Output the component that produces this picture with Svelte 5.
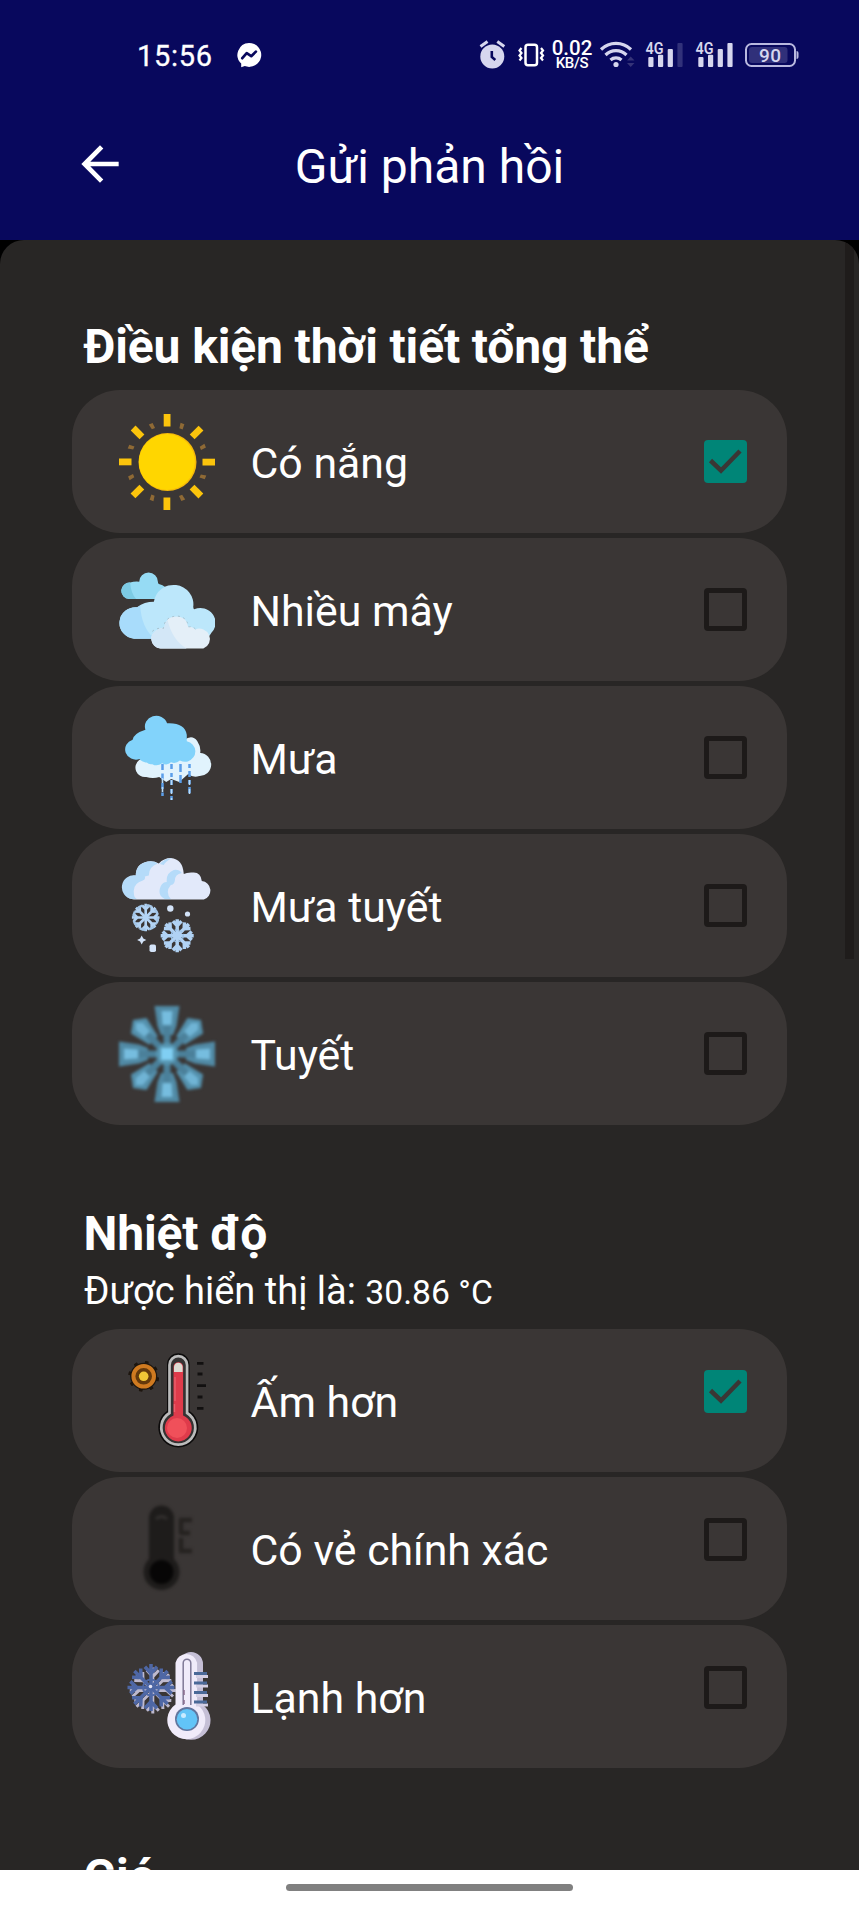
<script>
  let groups = $state([
    {
      title: 'Điều kiện thời tiết tổng thể',
      items: [
        { icon: 'sun', label: 'Có nắng', checked: true },
        { icon: 'clouds', label: 'Nhiều mây', checked: false },
        { icon: 'rain', label: 'Mưa', checked: false },
        { icon: 'sleet', label: 'Mưa tuyết', checked: false },
        { icon: 'snow', label: 'Tuyết', checked: false }
      ]
    },
    {
      title: 'Nhiệt độ',
      caption: 'Được hiển thị là:',
      value: '30.86 °C',
      items: [
        { icon: 'warmer', label: 'Ấm hơn', checked: true },
        { icon: 'accurate', label: 'Có vẻ chính xác', checked: false },
        { icon: 'colder', label: 'Lạnh hơn', checked: false }
      ]
    },
    { title: 'Gió', items: [] }
  ]);

  const eight = [0, 45, 90, 135, 180, 225, 270, 315];
</script>

{#snippet flake(cx, cy, s, color, w)}
  <g transform="translate({cx} {cy}) scale({s})" stroke={color} stroke-width={w} fill="none">
    {#each eight as a}
      <path d="M0 0V-10M-2.6-8.8L0-6 2.6-8.8" transform="rotate({a})" />
    {/each}
  </g>
{/snippet}

{#snippet weather(name)}
  <svg class="picture" class:soft={name === 'snow' || name === 'accurate'} viewBox="0 0 96 96" aria-hidden="true">
    {#if name === 'sun'}
      {#each eight as a}
        <rect x="44.7" y="0" width="6.8" height="12.5" fill="#fbc40c" transform="rotate({a} 48 48)" />
        <path d="M45.5 6.5L49.6 6.500 50 12 46.500 12Z" fill="#8f6a35" transform="rotate({a + 22.5} 48 48)" />
      {/each}
      <circle cx="48.5" cy="48" r="29" fill="#f5b90a" />
      <circle cx="47.9" cy="48" r="28" fill="#ffd600" />
    {:else if name === 'clouds'}
      <g transform="translate(-1 2.400) scale(1.010 .985)">
        <path d="M11 35a8.200 8.200 0 0 1 1-16.500q4-1.500 9-1a9.200 9.200 0 0 1 18.500 0q0 2 1 2.500 8 2 8.500 8v7z" fill="#96dbf4" />
        <path d="M11 35a8.200 8.200 0 0 1 1-16.500q1 12 6 16.500z" fill="#7dcbe4" />
        <path d="M16 75.500a15.800 15.800 0 0 1 3-32q7-5.500 16.500-5.500a19.600 19.600 0 0 1 39 5q0 2.500 1 2.500a15 15 0 0 1 17 24q-3 6-8 6z" fill="#bce7fb" />
        <path d="M16 75.500a15.800 15.800 0 0 1 3-32l3-1.700q1 22 14 33.700z" fill="#a8dcfb" />
        <path d="M42 85.500a10 10 0 0 1-2-19.500q3-2 6-1.500 1-11.500 12-11.500 10 0 11.500 10.500 4-1 7 2.500a10.300 10.300 0 0 1 8 19.500z" fill="#e4eff8" />
        <path d="M42 85.500a10 10 0 0 1-2-19.500q3-2 6-1.500 0-5 3-8 5 21 19 29z" fill="#d3e7f7" />
        <path d="M34 68q4-4 11-3 1-12 13-12.500 10 0 12 11 4-1 7 2.500" fill="none" stroke="#a5bcc8" stroke-width=".9" stroke-dasharray="2 3.500" />
      </g>
    {:else if name === 'rain'}
      <path d="M28 67a9.500 9.500 0 0 1-7-17L66 30q8-6 13 1 4 6 3 12a11.500 11.500 0 0 1-1 23q-6 2-11-2l-9 8-8-3-5 3-7-5q-6 2-13 0z" fill="#e1f3fd" transform="translate(-.800 0)" />
      <path transform="translate(.800 4) scale(.985 .920)" d="M27 53q-5-1-7-4A10.300 10.300 0 1 1 13 28q1-7 13-11a11 11 0 0 1 22-7q18-1 20 12.500v7a11.500 11.500 0 0 1 1 22q-4 1-8-1-4 4-9 2-4 4-9 1-5 4-10 1-3 1-6-2z" fill="#82d3fb" />
      <g stroke="#5b9ee9" stroke-width="2.500">
        <path d="M43.500 54v32" stroke-dasharray="6 3.500" />
        <path d="M52.500 54v36" stroke-dasharray="5 4 4 3" />
        <path d="M61.500 54v19" stroke-dasharray="8 3" />
        <path d="M70.500 54v32" stroke-dasharray="4 3 6 3" />
      </g>
      <path d="M43.500 68v14M52.500 70v20M70.500 70v15" stroke="#b9dcfa" stroke-width="1.600" stroke-dasharray="5 4" />
    {:else if name === 'sleet'}
      <g transform="translate(1.800 0)">
        <path d="M13 41.500a11.500 11.500 0 0 1 2-24q0-12 12-14 6-1 11 2Q43 0 50 0q12 1 13 16 3-2 10-1.500 7 0 8 8.500a9.500 9.500 0 0 1 2 18.500z" fill="#e2e9fa" />
        <path d="M11 41a11.500 11.500 0 0 1 4-23.500q0-12 12-14 6-1 10 2-9 3-9 12l-4 1q1 3-2 4-10 3-9 12 0 5 3 6.500zM39 6q5-6 12-6-7 4-8 7zM44 41q-8-4-4-13 2-4 6-4-1-9 7-12 5-1 8 3-7 1-7 8-1 4-4 4-6 7 0 14z" fill="#b5dbf9" />
      </g>
      {@render flake(26.7, 59.5, 1.38, '#b3d4f5', 1.9)}
      <circle cx="26.700" cy="59.500" r="12.300" fill="none" stroke="#a3c6e8" stroke-width="2.500" stroke-dasharray="6 3.660" />
      {@render flake(58.2, 77.7, 1.65, '#b0d2f4', 2.1)}
      <circle cx="58.200" cy="77.700" r="6" fill="none" stroke="#9cc3e8" stroke-width="1.500" stroke-dasharray="3 2" />
      <g fill="#d3e3f8">
        <circle cx="51.300" cy="50.500" r="3.200" /><circle cx="68.500" cy="56" r="2.600" />
        <path d="M22.700 77.500l1.600 3 3 1.500-3 1.500-1.600 3-1.600-3-3-1.500 3-1.500z" /><rect x="30.500" y="86.500" width="6.500" height="7.500" rx="1.800" />
      </g>
    {:else if name === 'snow'}
      {#each eight as a}
        <g transform="rotate({a} 48 48)">
          {#if a % 90 === 0}
            <path d="M35.500 0H60.500L57.500 20 54 29H42L38.500 20Z" fill="#518aa5" /><path d="M42.500 5h11l-1 14h-9z" fill="#76bddf" />
          {:else}
            <path d="M48 0L59 8 54 29H42L37 8Z" fill="#5490ac" /><path d="M48 4L53 9 51.500 24h-7l-1.500-15z" fill="#70b4d5" />
          {/if}
          <path d="M44.500 20h7v28h-7z" fill="#4b809a" />
        </g>
      {/each}
      <circle cx="48" cy="48" r="11" fill="#5796b2" /><rect x="42" y="42" width="12" height="12" fill="#80cff3" />
    {:else if name === 'warmer'}
      {#each eight as a}
        <rect x="23" y="8" width="3.400" height="30.600" fill="#1d160f" transform="rotate({a + 12} 24.700 23.300)" />
      {/each}
      <circle cx="24.700" cy="23.300" r="13.500" fill="#1d160f" />
      <circle cx="24.700" cy="23.300" r="10.300" fill="#64390b" stroke="#cf7a20" stroke-width="4" />
      <circle cx="24.700" cy="23.300" r="4.800" fill="#f0c636" />
      <path d="M48 11.500a11.300 11.300 0 0 1 22.600 0V58a20 20 0 1 1-22.600 0z" fill="#0c0b0b" />
      <path d="M50.500 12a8.800 8.800 0 0 1 17.600 0V60a17 17 0 1 1-17.600 0z" fill="#343232" stroke="#bcbcbc" stroke-width="2.700" />
      <path d="M54.500 14a4.800 4.800 0 0 1 9.600 0v48.500a13.400 13.400 0 1 1-9.600 0z" fill="#df3b4b" />
      <path d="M55 19v-5a4.300 4.300 0 0 1 8.600 0v5z" fill="#dedbd2" />
      <circle cx="58" cy="75" r="10" fill="#f0505a" />
      <path d="M56 24v24M55.500 51v8" stroke="#e9606c" stroke-width="1.400" />
      <path d="M78 10.300h6.500M78.500 21h5M78 32.600h9M78.500 44h5M78 55.300h6.500" stroke="#121010" stroke-width="2.800" />
    {:else if name === 'accurate'}
      <path d="M30 17a12.500 12.500 0 0 1 25 0V58a18 18 0 1 1-25 0z" fill="#1e1c1b" />
      <path d="M37 18q5.500-5 11 0" fill="none" stroke="#33302f" stroke-width="3" />
      <circle cx="42.500" cy="71" r="12" fill="#070606" />
      <path d="M60 19h13M62 19v14M61 32h10M62 37v14M60 50h13" fill="none" stroke="#252220" stroke-width="4.500" />
    {:else}
      {@render flake(33.8, 41.5, 2.3, '#bdb9cf', 1.3)}
      {@render flake(32, 38.5, 2.35, '#4e67a5', 1.500)}
      <circle cx="32" cy="38.500" r="8" fill="none" stroke="#506aa8" stroke-width="2" />
      <circle cx="31.500" cy="37.500" r="1.800" fill="#e6e5f4" />
      <path d="M60 15a12 12 0 0 1 24 0V56a19.500 19.500 0 1 1-24 0z" fill="#c5bfd6" />
      <path d="M56.500 13.800a11 11 0 0 1 21.600 0V55.500a19 19 0 1 1-21.600 0z" fill="#f0ebfa" />
      <path d="M64.200 56V14a3.800 3.800 0 0 1 7.600 0v42" fill="none" stroke="#7f7997" stroke-width="1.500" />
      <circle cx="68" cy="70" r="12" fill="#61769f" /><circle cx="68" cy="70.300" r="10.300" fill="#62c4f7" />
      <circle cx="64.500" cy="66.500" r="2.500" fill="#c9ebff" />
      <path d="M65 41v5M65 51v4" stroke="#8a6d8e" stroke-width="1.500" />
      <path d="M77 27.500h12M77 37h12M77 46.500h12M77 56h12" stroke="#d4cfe4" stroke-width="3" />
      <path d="M75 24.500h13M75 34h13M75 43.500h13M75 53h13" stroke="#4a6998" stroke-width="3" />
    {/if}
  </svg>
{/snippet}

{#snippet signal(weak)}
  <svg class="signal" width="40" height="30" viewBox="645 40 40 30" fill="#d6d6ee" aria-hidden="true">
    <text x="645.500" y="53.500" font-size="16.500" font-weight="600" textLength="18" lengthAdjust="spacingAndGlyphs">4G</text>
    <rect x="648.300" y="57" width="5.200" height="10" rx="1" />
    <rect x="658" y="54.800" width="5.200" height="12.200" rx="1" />
    <rect x="667.700" y="49" width="5.200" height="18" rx="1" />
    <rect x="677.400" y="43" width="5.200" height="24" rx="1" opacity={weak ? 0.2 : 1} />
  </svg>
{/snippet}

<div class="screen">
  <header>
    <div class="status">
      <span class="time">15:56</span>
      <svg class="messenger" width="26" height="26" viewBox="0 0 26 26" aria-hidden="true">
        <path d="M13 .9a12.100 12 0 1 1-4.200 23.200L5.200 25.300V21.600A12 12 0 0 1 13 .9z" fill="#fff" />
        <path d="M6.300 16.200l4.400-5 4.500 3 4.700-4.600" fill="none" stroke="#08085d" stroke-width="2.700" stroke-linejoin="round" stroke-linecap="round" />
      </svg>
      <svg class="alarm" width="28" height="30" viewBox="478 40 28 30" aria-hidden="true">
        <circle cx="492.300" cy="56.500" r="12" fill="#d6d6ee" />
        <path d="M480.500 46.500l7-5M504.300 46.500l-7-5" stroke="#d6d6ee" stroke-width="3" />
        <path d="M491.800 51v6l3.500 3" fill="none" stroke="#08085d" stroke-width="2.600" />
      </svg>
      <svg class="vibrate" width="28" height="30" viewBox="517 40 28 30" fill="none" stroke="#fff" aria-hidden="true">
        <rect x="525.500" y="44.800" width="11.500" height="20.500" rx="2.500" stroke-width="2.500" />
        <path d="M521.500 48l-2 2.500 2 2.500-2 2.500 2 2.500-2 2.500M541 48l2 2.500-2 2.500 2 2.500-2 2.500 2 2.500" stroke-width="2.200" />
      </svg>
      <span class="speed"><b>0.02</b><i>KB/S</i></span>
      <svg class="wifi" width="36" height="30" viewBox="599 40 36 30" fill="none" aria-hidden="true">
        <path d="M601 49.500a21.500 21.500 0 0 1 30 0M605.500 55a15 15 0 0 1 21 0M610.500 60a8.300 8.300 0 0 1 11 0" stroke="#d6d6ee" stroke-width="3.200" />
        <circle cx="616" cy="64.500" r="2.600" fill="#d6d6ee" />
        <path d="M627 60.500l3.700-4 3.800 4zM627 63l3.700 4 3.800-4z" fill="#353378" />
      </svg>
      {@render signal(true)}
      {@render signal(false)}
      <svg class="battery" width="55" height="30" viewBox="744 40 55 30" aria-hidden="true">
        <rect x="746" y="44" width="49" height="22" rx="5.500" fill="none" stroke="#b9b9df" stroke-width="2" />
        <rect x="749" y="47" width="38.500" height="16" rx="3" fill="#30307a" />
        <path d="M796.500 51q2 0 2 2v4q0 2-2 2z" fill="#b9b9df" />
        <text x="759" y="61.800" font-size="19" font-weight="500" fill="#d6d6ee" textLength="22">90</text>
      </svg>
    </div>
    <div class="toolbar">
      <svg width="56" height="56" viewBox="0 0 24 24" fill="#fff" aria-hidden="true"><path d="M20 11H7.830l5.590-5.590L12 4l-8 8 8 8 1.410-1.410L7.830 13H20z" /></svg>
      <h1>Gửi phản hồi</h1>
    </div>
  </header>

  <div class="backdrop">
    <main>
      {#each groups as group}
        <section>
          <h2>{group.title}</h2>
          {#if group.caption}<p><span>{group.caption}</span> <small>{group.value}</small></p>{/if}
          <div class="list" class:raised={!!group.caption}>
            {#each group.items as item}
              <button class="card" role="checkbox" aria-checked={item.checked} onclick={() => (item.checked = !item.checked)}>
                {@render weather(item.icon)}
                <span class="label">{item.label}</span>
                <span class="box" class:on={item.checked}>
                  {#if item.checked}
                    <svg viewBox="0 0 43 43" aria-hidden="true"><path d="M6.500 20.500L17 30.500 36 11" fill="none" stroke="#3a3635" stroke-width="4.500" /></svg>
                  {/if}
                </span>
              </button>
            {/each}
          </div>
        </section>
      {/each}
      <div class="scrollbar"></div>
    </main>
  </div>

  <footer><div></div></footer>
</div>

<style>
  :global(body) { margin: 0; }
  .screen {
    width: 859px; height: 1908px; display: flex; flex-direction: column; overflow: hidden;
    font-family: Roboto, "Noto Sans", sans-serif; color: #fff; background: #fff;
  }
  header { height: 240px; flex: none; background: #08085d; }
  .status { display: flex; align-items: center; height: 110px; box-sizing: border-box; padding-left: 137px; }
  .time { width: 75px; font-size: 29px; font-weight: 400; -webkit-text-stroke: .3px #fff; letter-spacing: .7px; white-space: nowrap; line-height: 30px; padding-top: 1px; }
  .messenger { margin-left: 24px; }
  .alarm { margin-left: 216px; }
  .vibrate { margin-left: 11px; }
  .speed { width: 42px; margin: 0 0 0 6px; display: flex; flex-direction: column; align-items: center; gap: 1px; }
  .speed b { font-size: 20.500px; font-weight: 500; line-height: 16px; }
  .speed i { font-size: 15px; font-style: normal; font-weight: 500; line-height: 13px; letter-spacing: -.3px; }
  .wifi { margin-left: 6px; }
  .signal { margin-left: 10px; }
  .battery { margin-left: 9px; }
  svg { display: block; flex: none; }
  .toolbar { display: grid; grid-template-columns: 56px 1fr 56px; align-items: center; height: 107px; padding: 0 72px; }
  h1 { margin: 6px 0 0; font-size: 48px; font-weight: 400; line-height: 56px; text-align: center; }
  .backdrop { flex: 1; min-height: 0; background: #000; }
  main { position: relative; height: 100%; box-sizing: border-box; padding: 0 72px; overflow: hidden; background: #282625; border-radius: 24px 24px 0 0; }
  section { padding-top: 78px; }
  section:not(:first-child) { padding-top: 80px; }
  h2 { margin: 0 0 0 11.500px; font-size: 48px; letter-spacing: -.14px; font-weight: 700; line-height: 57px; white-space: nowrap; }
  p { margin: 5px 0 0 12px; height: 46px; line-height: 48px; font-size: 38px; white-space: nowrap; }
  small { font-size: 33.700px; }
  .list { display: flex; flex-direction: column; gap: 5px; padding-top: 16px; }
  section:first-child .list { padding-top: 15px; }
  .card {
    display: flex; align-items: center; width: 715px; height: 143px; box-sizing: border-box; flex: none;
    padding: 0 40px 0 47px; border: 0; border-radius: 48px; background: #3a3635; color: #fff; font: inherit; text-align: left;
  }
  .picture { width: 96px; height: 96px; filter: blur(.7px); overflow: hidden; }
  .soft { filter: blur(1.800px); }
  .label { flex: 1; margin-left: 35.500px; font-size: 42.800px; line-height: 50px; padding-top: 3px; white-space: nowrap; }
  .box { width: 43px; height: 43px; box-sizing: border-box; border: 5px solid #1d1a19; border-radius: 4px; }
  .box.on { border: 0; background: #008577; }
  .raised .box { margin-bottom: 19px; }
  .scrollbar { position: absolute; top: 0; right: 5px; width: 9px; height: 719px; background: #1f1c1b; }
  footer { height: 38px; flex: none; display: flex; justify-content: center; padding-top: 14px; box-sizing: border-box; }
  footer div { width: 287px; height: 7px; border-radius: 4px; background: #808080; }
</style>
